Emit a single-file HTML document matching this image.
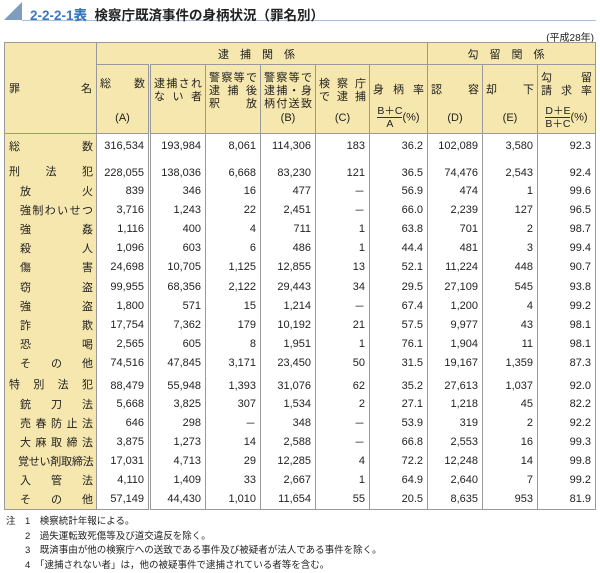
<!DOCTYPE html>
<html><head><meta charset="utf-8"><style>
*{margin:0;padding:0;box-sizing:border-box}
body{width:600px;height:566px;background:#fff;font-family:"Liberation Sans","Noto Sans CJK JP",sans-serif;color:#222;position:relative;overflow:hidden}
.tri{position:absolute;left:4px;top:2px;width:0;height:0;border-left:18px solid transparent;border-bottom:18px solid #7f9dbf}
.tline{position:absolute;left:22px;top:20px;width:574px;height:1px;background:#a9c0da}
.title{position:absolute;left:30px;top:4px;font-size:13.5px;font-weight:bold;white-space:nowrap}
.title b{color:#3b78bb}
.year{position:absolute;right:6px;top:29px;font-size:10px}
table{position:absolute;left:4px;top:42px;border-collapse:collapse;table-layout:fixed;font-size:11px}
td{border-left:1px solid #999;padding:0 4px 0 0;text-align:right;white-space:nowrap;vertical-align:middle}
td.n{background:#f6e7ae;text-align:left;padding:0 3px 0 4px;border-left:none}
td.dbl{border-left:3px double #999}
.h td{background:#f6e7ae;border-bottom:1px solid #999;text-align:center;padding:0}
.h1 td{height:22px}
.hc{position:relative;height:68px;font-size:11px;line-height:13px}
.hc .t{position:absolute;left:3px;right:3px;top:7px;text-align:justify;text-align-last:justify}
.hc .b{position:absolute;left:0;right:0;bottom:8px;text-align:center}
.sp{display:flex;justify-content:space-between}
.ind{padding-left:15px !important}
.frac{display:inline-block;vertical-align:middle;text-align:center;font-size:10.5px;line-height:12px}
.frac span{display:block;border-top:1px solid #333}
tbody.d td{height:19.1px}
table{border:1px solid #999}
.notes{position:absolute;left:6px;top:515px;font-size:9.5px;line-height:14.5px}
.notes div{white-space:nowrap}
</style></head><body>
<div class="tri"></div><div class="tline"></div>
<div class="title"><b>2-2-2-1表</b>&nbsp; 検察庁既済事件の身柄状況（罪名別）</div>
<div class="year">(平成28年)</div>
<table>
<colgroup><col style="width:92px"><col style="width:53px"><col style="width:56px"><col style="width:55px"><col style="width:55px"><col style="width:54px"><col style="width:58px"><col style="width:55px"><col style="width:55px"><col style="width:58px"></colgroup>
<tbody class="h">
<tr class="h1"><td class="n" rowspan="2" style="text-align:left;padding:0 4px"><div class="sp"><span>罪</span><span>名</span></div></td><td colspan="6" style="letter-spacing:11px">逮捕関係</td><td colspan="3" style="letter-spacing:11px">勾留関係</td></tr>
<tr>
<td><div class="hc"><div class="t" style="top:13px">総 数</div><div class="b">(A)</div></div></td>
<td class="dbl"><div class="hc"><div class="t" style="top:13px">逮捕され<br>な い 者</div></div></td>
<td><div class="hc"><div class="t">警察等で<br>逮 捕 後<br>釈　 放</div></div></td>
<td><div class="hc"><div class="t">警察等で<br>逮捕・身<br>柄付送致</div><div class="b">(B)</div></div></td>
<td><div class="hc"><div class="t" style="top:13px">検 察 庁<br>で 逮 捕</div><div class="b">(C)</div></div></td>
<td><div class="hc"><div class="t" style="top:19px">身 柄 率</div><div class="b" style="bottom:3px"><span class="frac">B＋C<span>A</span></span>(%)</div></div></td>
<td><div class="hc"><div class="t" style="top:19px">認 容</div><div class="b">(D)</div></div></td>
<td><div class="hc"><div class="t" style="top:19px">却 下</div><div class="b">(E)</div></div></td>
<td><div class="hc"><div class="t">勾 留<br>請 求 率</div><div class="b" style="bottom:3px"><span class="frac">D＋E<span>B＋C</span></span>(%)</div></div></td>
</tr></tbody>
<tbody>
<tr style="height:25px"><td class="n"><div class="sp"><span>総</span><span>数</span></div></td><td>316,534</td><td class="dbl">193,984</td><td>8,061</td><td>114,306</td><td>183</td><td>36.2</td><td>102,089</td><td>3,580</td><td>92.3</td></tr>
<tr style="height:23px"><td class="n" style="vertical-align:bottom;padding-bottom:3px"><div class="sp"><span>刑</span><span>法</span><span>犯</span></div></td><td style="vertical-align:bottom;padding-bottom:3px">228,055</td><td class="dbl" style="vertical-align:bottom;padding-bottom:3px">138,036</td><td style="vertical-align:bottom;padding-bottom:3px">6,668</td><td style="vertical-align:bottom;padding-bottom:3px">83,230</td><td style="vertical-align:bottom;padding-bottom:3px">121</td><td style="vertical-align:bottom;padding-bottom:3px">36.5</td><td style="vertical-align:bottom;padding-bottom:3px">74,476</td><td style="vertical-align:bottom;padding-bottom:3px">2,543</td><td style="vertical-align:bottom;padding-bottom:3px">92.4</td></tr>
</tbody>
<tbody class="d">
<tr><td class="n ind"><div class="sp"><span>放</span><span>火</span></div></td><td>839</td><td class="dbl">346</td><td>16</td><td>477</td><td>－</td><td>56.9</td><td>474</td><td>1</td><td>99.6</td></tr>
<tr><td class="n ind"><div class="sp"><span>強</span><span>制</span><span>わ</span><span>い</span><span>せ</span><span>つ</span></div></td><td>3,716</td><td class="dbl">1,243</td><td>22</td><td>2,451</td><td>－</td><td>66.0</td><td>2,239</td><td>127</td><td>96.5</td></tr>
<tr><td class="n ind"><div class="sp"><span>強</span><span>姦</span></div></td><td>1,116</td><td class="dbl">400</td><td>4</td><td>711</td><td>1</td><td>63.8</td><td>701</td><td>2</td><td>98.7</td></tr>
<tr><td class="n ind"><div class="sp"><span>殺</span><span>人</span></div></td><td>1,096</td><td class="dbl">603</td><td>6</td><td>486</td><td>1</td><td>44.4</td><td>481</td><td>3</td><td>99.4</td></tr>
<tr><td class="n ind"><div class="sp"><span>傷</span><span>害</span></div></td><td>24,698</td><td class="dbl">10,705</td><td>1,125</td><td>12,855</td><td>13</td><td>52.1</td><td>11,224</td><td>448</td><td>90.7</td></tr>
<tr><td class="n ind"><div class="sp"><span>窃</span><span>盗</span></div></td><td>99,955</td><td class="dbl">68,356</td><td>2,122</td><td>29,443</td><td>34</td><td>29.5</td><td>27,109</td><td>545</td><td>93.8</td></tr>
<tr><td class="n ind"><div class="sp"><span>強</span><span>盗</span></div></td><td>1,800</td><td class="dbl">571</td><td>15</td><td>1,214</td><td>－</td><td>67.4</td><td>1,200</td><td>4</td><td>99.2</td></tr>
<tr><td class="n ind"><div class="sp"><span>詐</span><span>欺</span></div></td><td>17,754</td><td class="dbl">7,362</td><td>179</td><td>10,192</td><td>21</td><td>57.5</td><td>9,977</td><td>43</td><td>98.1</td></tr>
<tr><td class="n ind"><div class="sp"><span>恐</span><span>喝</span></div></td><td>2,565</td><td class="dbl">605</td><td>8</td><td>1,951</td><td>1</td><td>76.1</td><td>1,904</td><td>11</td><td>98.1</td></tr>
<tr><td class="n ind"><div class="sp"><span>そ</span><span>の</span><span>他</span></div></td><td>74,516</td><td class="dbl">47,845</td><td>3,171</td><td>23,450</td><td>50</td><td>31.5</td><td>19,167</td><td>1,359</td><td>87.3</td></tr>
<tr style="height:22px"><td class="n" style="vertical-align:bottom;padding-bottom:2px"><div class="sp"><span>特</span><span>別</span><span>法</span><span>犯</span></div></td><td style="vertical-align:bottom;padding-bottom:2px">88,479</td><td class="dbl" style="vertical-align:bottom;padding-bottom:2px">55,948</td><td style="vertical-align:bottom;padding-bottom:2px">1,393</td><td style="vertical-align:bottom;padding-bottom:2px">31,076</td><td style="vertical-align:bottom;padding-bottom:2px">62</td><td style="vertical-align:bottom;padding-bottom:2px">35.2</td><td style="vertical-align:bottom;padding-bottom:2px">27,613</td><td style="vertical-align:bottom;padding-bottom:2px">1,037</td><td style="vertical-align:bottom;padding-bottom:2px">92.0</td></tr>
<tr><td class="n ind"><div class="sp"><span>銃</span><span>刀</span><span>法</span></div></td><td>5,668</td><td class="dbl">3,825</td><td>307</td><td>1,534</td><td>2</td><td>27.1</td><td>1,218</td><td>45</td><td>82.2</td></tr>
<tr><td class="n ind"><div class="sp"><span>売</span><span>春</span><span>防</span><span>止</span><span>法</span></div></td><td>646</td><td class="dbl">298</td><td>－</td><td>348</td><td>－</td><td>53.9</td><td>319</td><td>2</td><td>92.2</td></tr>
<tr><td class="n ind"><div class="sp"><span>大</span><span>麻</span><span>取</span><span>締</span><span>法</span></div></td><td>3,875</td><td class="dbl">1,273</td><td>14</td><td>2,588</td><td>－</td><td>66.8</td><td>2,553</td><td>16</td><td>99.3</td></tr>
<tr><td class="n" style="padding-left:13px"><div class="sp" style="letter-spacing:-0.6px"><span>覚</span><span>せ</span><span>い</span><span>剤</span><span>取</span><span>締</span><span>法</span></div></td><td>17,031</td><td class="dbl">4,713</td><td>29</td><td>12,285</td><td>4</td><td>72.2</td><td>12,248</td><td>14</td><td>99.8</td></tr>
<tr><td class="n ind"><div class="sp"><span>入</span><span>管</span><span>法</span></div></td><td>4,110</td><td class="dbl">1,409</td><td>33</td><td>2,667</td><td>1</td><td>64.9</td><td>2,640</td><td>7</td><td>99.2</td></tr>
<tr><td class="n ind"><div class="sp"><span>そ</span><span>の</span><span>他</span></div></td><td>57,149</td><td class="dbl">44,430</td><td>1,010</td><td>11,654</td><td>55</td><td>20.5</td><td>8,635</td><td>953</td><td>81.9</td></tr>
</tbody></table>
<div class="notes">
<div>注　1　検察統計年報による。</div>
<div>　　2　過失運転致死傷等及び道交違反を除く。</div>
<div>　　3　既済事由が他の検察庁への送致である事件及び被疑者が法人である事件を除く。</div>
<div>　　4　「逮捕されない者」は，他の被疑事件で逮捕されている者等を含む。</div>
</div>
</body></html>
